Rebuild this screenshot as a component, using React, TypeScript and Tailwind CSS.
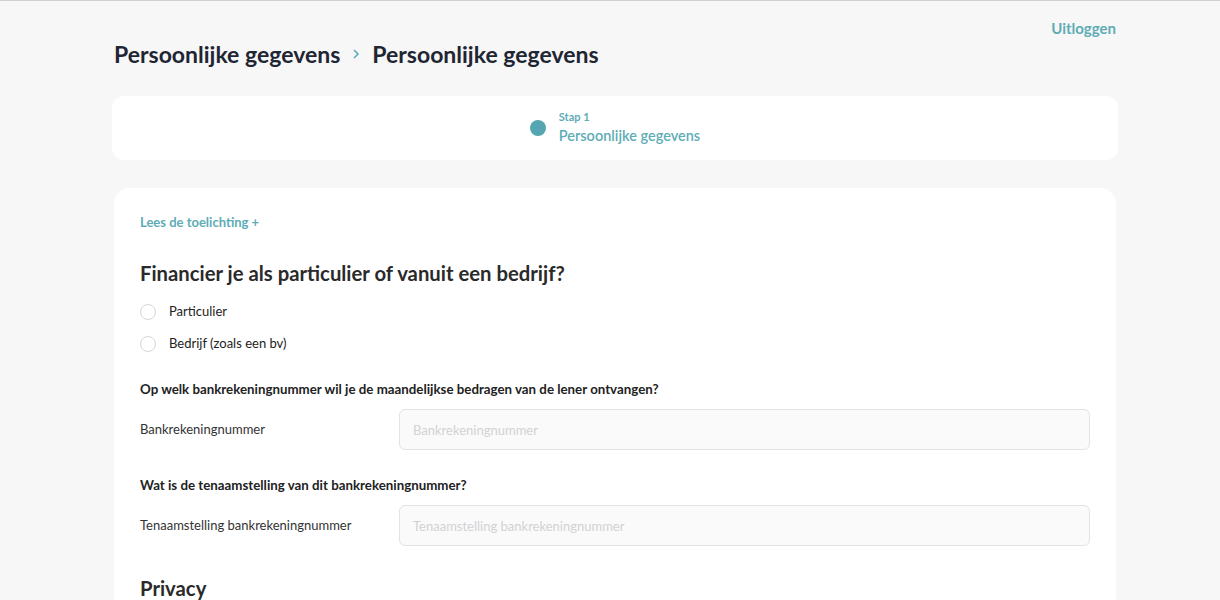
import React from "react";

const FONT = { fontFamily: "Lato, 'Noto Sans', sans-serif" };

function Radio({ label }: { label: string }) {
  return (
    <label className="flex items-center gap-[13px] h-[16px]">
      <span className="w-[16px] h-[16px] rounded-full border border-[#d4d4d4] bg-white" />
      <span className="text-[13px] text-[#222]">{label}</span>
    </label>
  );
}

function Field({ question, label }: { question: string; label: string }) {
  return (
    <div>
      <p className="text-[13.3px] font-bold text-[#222] leading-[18px]">{question}</p>
      <div className="mt-[11px] flex items-center">
        <span className="w-[259px] text-[13px] text-[#333]">{label}</span>
        <input
          placeholder={label}
          className="flex-1 h-[41px] rounded-[6px] border border-[#e3e3e3] bg-[#fafafa] px-[13px] text-[13px] placeholder:text-[#d2d2d2] outline-none"
        />
      </div>
    </div>
  );
}

export default function App() {
  return (
    <div className="min-h-screen bg-[#f7f7f7] border-t border-[#d0d0d0]" style={FONT}>
      <div className="mx-auto w-[1016px] pl-[10px] relative">
        <a className="absolute right-[2px] top-[16px] text-[15px] font-bold text-[#5eacb6]">Uitloggen</a>
        <div className="pt-[38px] flex items-center gap-[11px] text-[23px] font-bold text-[#1f2633] leading-[30px]">
          <span className="pl-[2px]">Persoonlijke gegevens</span>
          <svg width="10" height="12" viewBox="0 0 10 12" className="text-[#5eacb6]">
            <path d="M3 2l4 4-4 4" fill="none" stroke="currentColor" strokeWidth="1.6" />
          </svg>
          <span>Persoonlijke gegevens</span>
        </div>

        <div className="mt-[27px] h-[64px] bg-white rounded-[12px] flex items-center justify-center">
          <div className="flex items-center gap-[13px]">
            <span className="w-[16px] h-[16px] rounded-full bg-[#55a6b0]" />
            <div className="flex flex-col">
              <span className="text-[11px] font-bold text-[#5eacb6] leading-[14px]">Stap 1</span>
              <span className="text-[14.5px] font-semibold text-[#5eacb6] leading-[20px] mt-[2px]">Persoonlijke gegevens</span>
            </div>
          </div>
        </div>

        <div className="mt-[28px] mx-[2px] bg-white rounded-[16px] px-[26px] pt-[21px] pb-[40px]">
          <a className="text-[13px] font-bold text-[#5eacb6]">Lees de toelichting +</a>
          <h2 className="mt-[26px] text-[20.3px] font-bold text-[#2a2a2a] leading-[28px]">
            Financier je als particulier of vanuit een bedrijf?
          </h2>
          <div className="mt-[17px] flex flex-col gap-[16px]">
            <Radio label="Particulier" />
            <Radio label="Bedrijf (zoals een bv)" />
          </div>
          <div className="mt-[28px] flex flex-col gap-[26px]">
            <Field
              question="Op welk bankrekeningnummer wil je de maandelijkse bedragen van de lener ontvangen?"
              label="Bankrekeningnummer"
            />
            <Field
              question="Wat is de tenaamstelling van dit bankrekeningnummer?"
              label="Tenaamstelling bankrekeningnummer"
            />
          </div>
          <h2 className="mt-[28px] text-[20.3px] font-bold text-[#2a2a2a] leading-[28px]">Privacy</h2>
        </div>
      </div>
    </div>
  );
}
